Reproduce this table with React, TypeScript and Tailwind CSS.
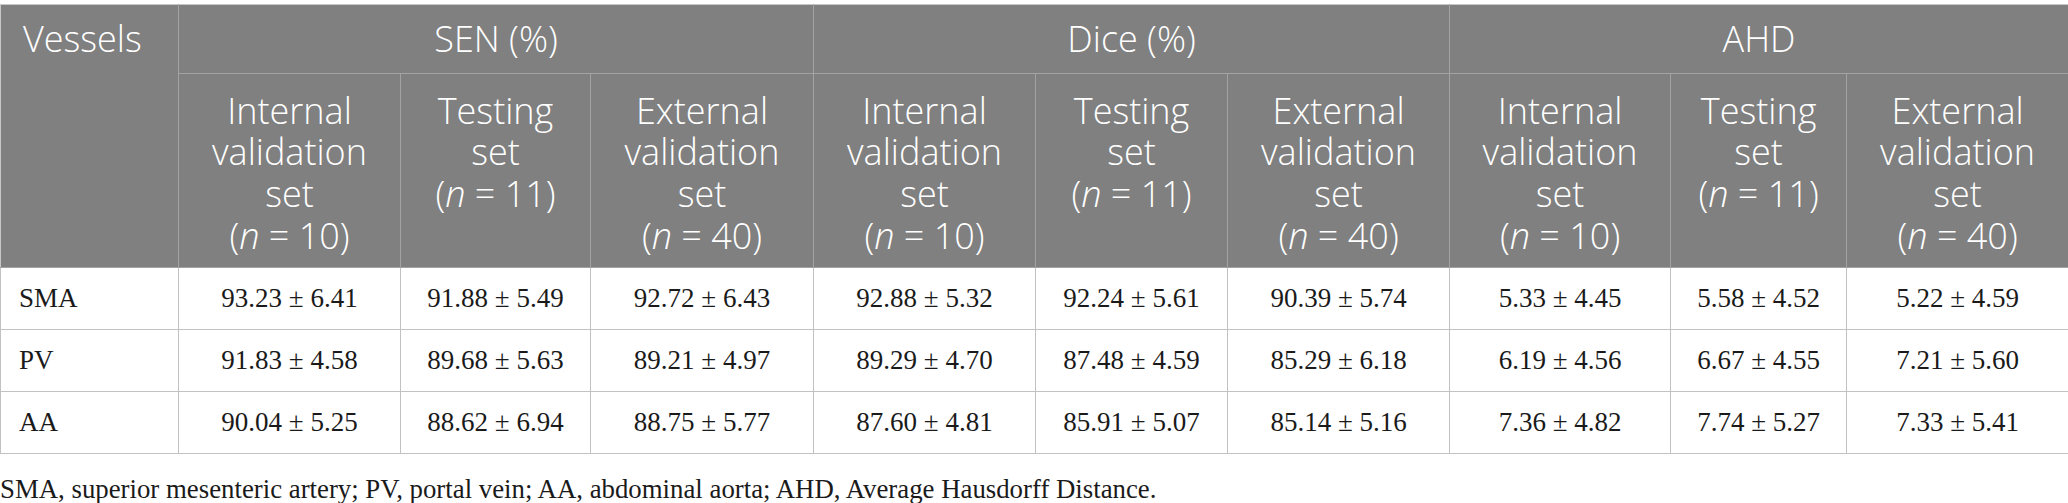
import React from "react";

const groups = ["SEN (%)", "Dice (%)", "AHD"];

const rows: { name: string; values: string[] }[] = [
  {
    name: "SMA",
    values: ["93.23 ± 6.41", "91.88 ± 5.49", "92.72 ± 6.43", "92.88 ± 5.32", "92.24 ± 5.61", "90.39 ± 5.74", "5.33 ± 4.45", "5.58 ± 4.52", "5.22 ± 4.59"],
  },
  {
    name: "PV",
    values: ["91.83 ± 4.58", "89.68 ± 5.63", "89.21 ± 4.97", "89.29 ± 4.70", "87.48 ± 4.59", "85.29 ± 6.18", "6.19 ± 4.56", "6.67 ± 4.55", "7.21 ± 5.60"],
  },
  {
    name: "AA",
    values: ["90.04 ± 5.25", "88.62 ± 6.94", "88.75 ± 5.77", "87.60 ± 4.81", "85.91 ± 5.07", "85.14 ± 5.16", "7.36 ± 4.82", "7.74 ± 5.27", "7.33 ± 5.41"],
  },
];

const headCell = "border border-[#a3a3a3] align-top px-2 font-light";

function Lines({ lines, n }: { lines: string[]; n: number }) {
  return (
    <>
      {lines.map(l => (
        <span key={l} className="block whitespace-nowrap">
          {l}
        </span>
      ))}
      <span className="block whitespace-nowrap">
        (<i>n</i> = {n})
      </span>
    </>
  );
}

function SubHeads() {
  const sub = `${headCell} pt-[16px] pb-[10px]`;
  return (
    <>
      <th className={sub}>
        <Lines lines={["Internal", "validation", "set"]} n={10} />
      </th>
      <th className={sub}>
        <Lines lines={["Testing", "set"]} n={11} />
      </th>
      <th className={sub}>
        <Lines lines={["External", "validation", "set"]} n={40} />
      </th>
    </>
  );
}

export default function App() {
  return (
    <div className="w-[2068px] bg-white pt-[4px]">
      <table className="w-[2068px] table-fixed border-collapse">
        <colgroup>
          <col className="w-[178px]" />
          <col className="w-[222px]" />
          <col className="w-[190px]" />
          <col className="w-[223px]" />
          <col className="w-[222px]" />
          <col className="w-[192px]" />
          <col className="w-[222px]" />
          <col className="w-[221px]" />
          <col className="w-[176px]" />
          <col className="w-[222px]" />
        </colgroup>
        <thead className="bg-[#7f807f] text-white text-[36px] leading-[41.7px] font-['Open_Sans',sans-serif]">
          <tr className="h-[68px]">
            <th rowSpan={2} className={`${headCell} py-[13px] border-t-[#c8c8c8] border-l-[#c8c8c8] text-left pl-[22px]`}>
              Vessels
            </th>
            {groups.map(g => (
              <th key={g} colSpan={3} className={`${headCell} py-[13px] border-t-[#c8c8c8] text-center`}>
                {g}
              </th>
            ))}
          </tr>
          <tr className="h-[194px] text-center">
            <SubHeads />
            <SubHeads />
            <SubHeads />
          </tr>
        </thead>
        <tbody className="text-[27px] text-[#1a1a1a] font-['Liberation_Serif',serif]">
          {rows.map(r => (
            <tr key={r.name} className="h-[62px]">
              <td className="border border-[#c2c2c2] pl-[18px] align-middle">{r.name}</td>
              {r.values.map((v, i) => (
                <td key={i} className="border border-[#c2c2c2] text-center align-middle">
                  {v}
                </td>
              ))}
            </tr>
          ))}
        </tbody>
      </table>
      <p className="mt-[19px] text-[26.8px] leading-[32px] text-[#1a1a1a] font-['Liberation_Serif',serif]">
        SMA, superior mesenteric artery; PV, portal vein; AA, abdominal aorta; AHD, Average Hausdorff Distance.
      </p>
    </div>
  );
}
